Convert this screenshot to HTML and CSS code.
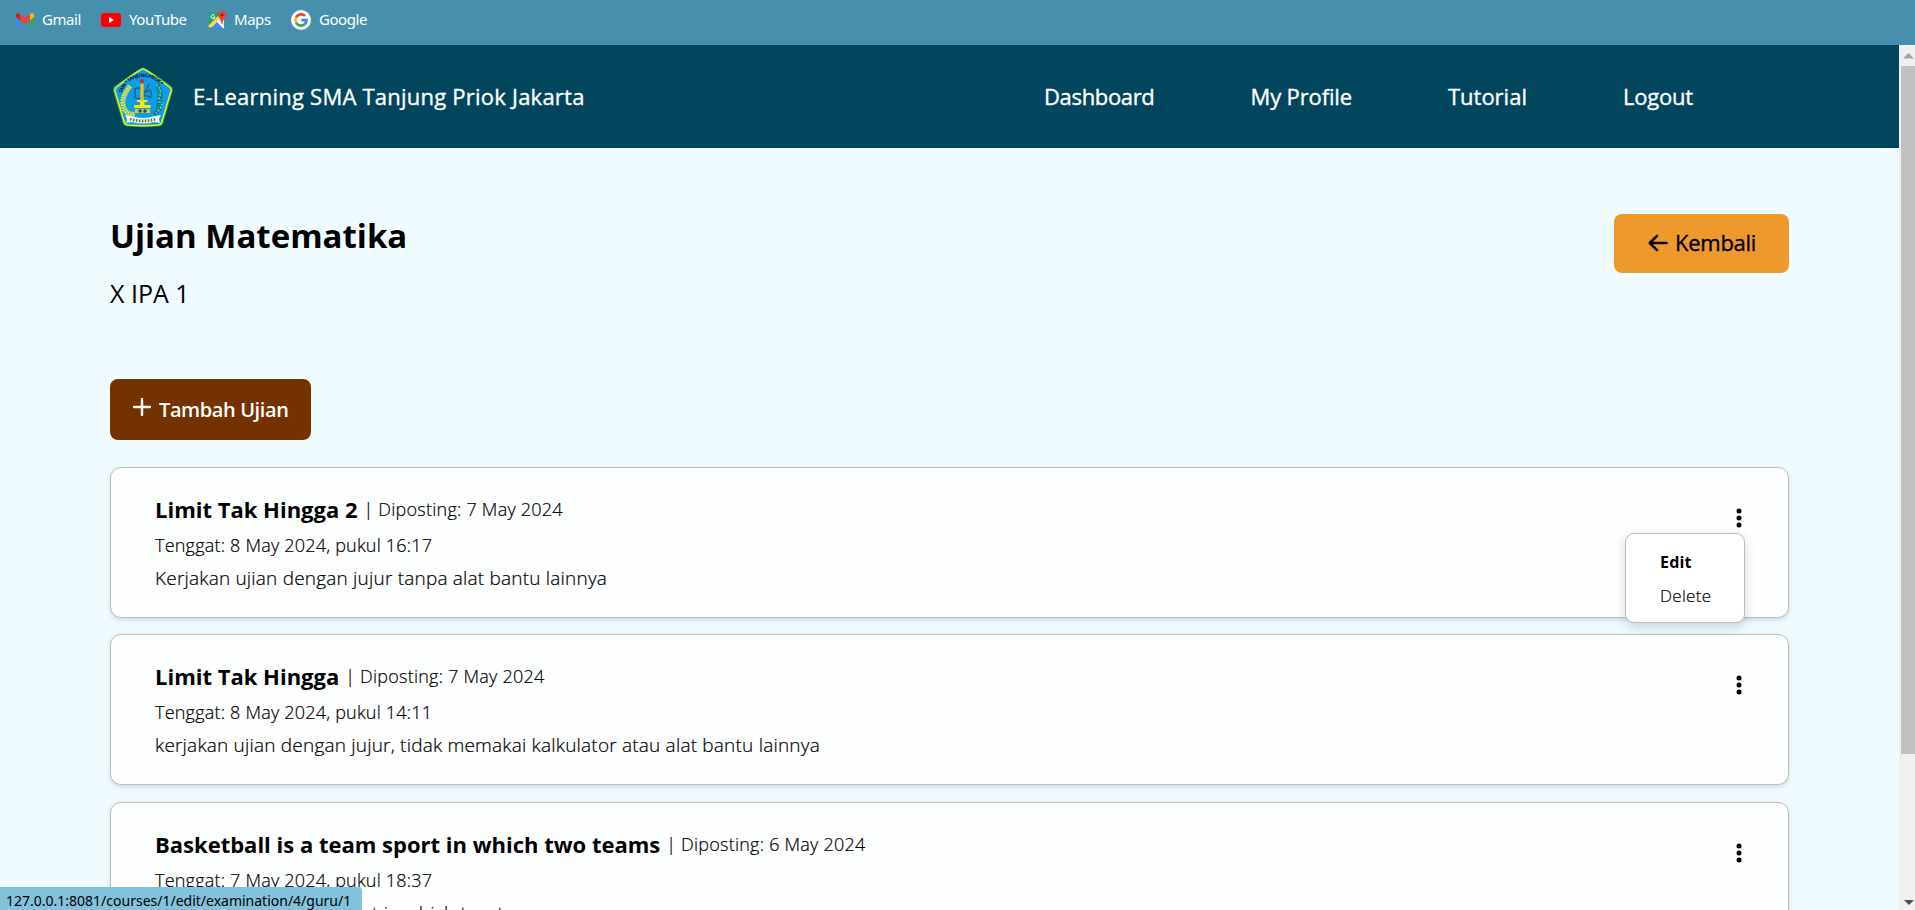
FILE: index.html
```html
<!DOCTYPE html>
<html lang="id">
<head>
<meta charset="utf-8">
<title>Ujian Matematika</title>
<link rel="stylesheet" href="styles.css">
</head>
<body>
<div class="bookmarks">
  <span class="bookmark bm-gmail"><svg width="18" height="14" viewBox="0 0 18 14"><path d="M0 3v9.500Q0 14 1.200 14H4V5z" fill="#4285f4"/><path d="M18 3v9.500Q18 14 16.800 14H14V5z" fill="#34a853"/><path d="M14 1.200 15 .5Q18-.6 18 2.500V4l-4 3.300z" fill="#fbbc04"/><path d="M4 1.200 9 5l5-3.800v6.100L9 11 4 7.300z" fill="#ea4335"/><path d="M4 1.200 3 .5Q0-.6 0 2.500V4l4 3.300z" fill="#c5221f"/></svg><span>Gmail</span></span>
  <span class="bookmark bm-youtube"><svg width="20" height="14" viewBox="0 0 20 14"><rect width="20" height="14" rx="3" fill="#f00"/><path d="M8 4v6l5-3z" fill="#fff"/></svg><span>YouTube</span></span>
  <span class="bookmark bm-maps"><svg width="18" height="18" viewBox="0 0 18 18"><path d="M1 2h15v14H1z" fill="#1fa463"/><path d="M1 16 14 3l2 2v11z" fill="#e8eaed"/><path d="M3 17 9.500 10.500 16 17z" fill="#4285f4"/><path d="M0 15 12 3l2 2L2 17z" fill="#fdd835"/><path d="M9.500 10.500 16 17" stroke="#fff" stroke-width="1.500"/><path d="M6.500 4.300A2 2 0 1 0 7 6H5.200" fill="none" stroke="#fff"/><path d="M14 0a4 4 0 0 1 4 4c0 3-3.300 4-3.600 9h-.8C13.300 8 10 7 10 4a4 4 0 0 1 4-4z" fill="#ea4335"/><circle cx="14" cy="4" r="1.500" fill="#8c1d18"/></svg><span>Maps</span></span>
  <span class="bookmark bm-google"><svg width="20" height="20" viewBox="0 0 20 20"><circle cx="10" cy="10" r="10" fill="#fff"/><g fill="none" stroke-width="2.700"><path d="M14 5.900A5.600 5.600 0 0 0 5.100 7.300" stroke="#ea4335"/><path d="M5.100 7.300a5.600 5.600 0 0 0 0 5.400" stroke="#fbbc05"/><path d="M5.100 12.700A5.600 5.600 0 0 0 13.600 14.300" stroke="#34a853"/><path d="M13.600 14.300A5.600 5.600 0 0 0 15.600 10.100H10.200" stroke="#4285f4"/></g></svg><span>Google</span></span>
</div>
<div class="viewport">
  <div class="page">
    <header class="navbar">
      <div class="brand">
        <svg class="logo" width="62" height="62" viewBox="0 0 62 62">
          <path d="M31 1.500Q34 1.500 60 20.500Q61.500 22 61 25L51 58Q50 60 46 60.500Q31 62 16 60.500Q12 60 11 58L1 25Q.5 22 2 20.500Q28 1.500 31 1.500z" fill="#1b9b4b"/>
          <path d="M31 3Q34 3 58 21.500Q59.500 23 59 25L49.500 57Q49 58.600 46 59Q31 60.500 16 59Q13 58.600 12.500 57L3 25Q2.500 23 4 21.500Q28 3 31 3z" fill="#0b9ee8" stroke="#f4ee20" stroke-width="1.500"/>
          <path id="logo-arc" d="M10 27Q16 11 31 11T54 27" fill="none"/>
          <text class="logo-text"><textPath href="#logo-arc" textLength="49">SMA * TANJUNG PRIOK *</textPath></text>
          <path d="M18 20Q7 34 13 44Q16 49 23 48" fill="none" stroke="#d5e44c" stroke-width="5" stroke-dasharray="2 .5"/>
          <path d="M45 19q4 6 3 12t-1 10-6 8" fill="none" stroke="#157865" stroke-width="5" stroke-dasharray="2 1"/>
          <path d="M44 19q6 4 4 10t1 8-5 10" fill="none" stroke="#8fd5d0" stroke-width="1.500" stroke-dasharray="1.500 2"/>
          <path d="M22 24q4-4 8 0t8-1M22 31q5 3 8 0t9 1M23 22v9m14-13-5 10M39 24v7" fill="none" stroke="#315b74" stroke-width="1.300"/>
          <path d="M28.500 18h3v16h4v2h-3v3h6v3H22v-3h6v-3h-3v-2h3.500z" fill="#f8e717"/>
          <path d="M30 16v19" stroke="#e19724"/>
          <circle cx="30" cy="15" r="2" fill="#e5232c"/>
          <path d="M23 43h15v4H23z" fill="#d9c936"/><circle cx="28" cy="45" r="1.800" fill="#26535a"/><circle cx="33" cy="45" r="1.800" fill="#26535a"/>
          <path d="M13 49l6 1q12 4 24 0l6-1-2 4 1 4-6-1q-11 3-22 0l-6 1 1-4z" fill="#eef5e7"/>
          <path d="M18 53q13 4 26 0" fill="none" stroke="#46776c" stroke-width="2.800" stroke-dasharray="1.500 1.500"/>
        </svg>
        <span class="brand-name">E-Learning SMA Tanjung Priok Jakarta</span>
      </div>
      <nav class="menu"><a class="nav-dashboard">Dashboard</a><a class="nav-profile">My Profile</a><a>Tutorial</a><a class="nav-logout">Logout</a></nav>
    </header>
    <main class="content">
      <div class="heading">
        <div><h1 class="title">Ujian Matematika</h1><p class="subtitle">X IPA 1</p></div>
        <a class="back"><svg width="20" height="18" viewBox="0 0 20 18"><path d="M9 1.800 1.800 9 9 16.200M2 9h16.500" fill="none" stroke="#000" stroke-width="2.500" stroke-linecap="round" stroke-linejoin="round"/></svg><span>Kembali</span></a>
      </div>
      <a class="add"><svg width="18" height="18" viewBox="0 0 18 18"><path d="M9 1v16M1 9h16" stroke="#fff" stroke-width="2.400" stroke-linecap="round"/></svg><span>Tambah Ujian</span></a>
      <div class="list">
        <article class="card">
          <div><div class="card-head"><h2 class="card-title">Limit Tak Hingga 2</h2><span class="sep">|</span><span class="posted">Diposting: 7 May 2024</span></div>
          <p class="due">Tenggat: 8 May 2024, pukul 16:17</p><p class="desc">Kerjakan ujian dengan jujur tanpa alat bantu lainnya</p></div>
          <div class="actions"><svg class="kebab" width="6" height="20" viewBox="0 0 6 20"><circle cx="3" cy="3" r="2.500"/><circle cx="3" cy="10" r="2.500"/><circle cx="3" cy="17" r="2.500"/></svg>
          <div class="dropdown"><a class="edit">Edit</a><a class="delete">Delete</a></div></div>
        </article>
        <article class="card">
          <div><div class="card-head"><h2 class="card-title">Limit Tak Hingga</h2><span class="sep">|</span><span class="posted">Diposting: 7 May 2024</span></div>
          <p class="due">Tenggat: 8 May 2024, pukul 14:11</p><p class="desc">kerjakan ujian dengan jujur, tidak memakai kalkulator atau alat bantu lainnya</p></div>
          <div class="actions"><svg class="kebab" width="6" height="20" viewBox="0 0 6 20"><circle cx="3" cy="3" r="2.500"/><circle cx="3" cy="10" r="2.500"/><circle cx="3" cy="17" r="2.500"/></svg></div>
        </article>
        <article class="card">
          <div><div class="card-head"><h2 class="card-title">Basketball is a team sport in which two teams</h2><span class="sep">|</span><span class="posted">Diposting: 6 May 2024</span></div>
          <p class="due">Tenggat: 7 May 2024, pukul 18:37</p><p class="desc">Basketball is a team sport in which two teams</p></div>
          <div class="actions"><svg class="kebab" width="6" height="20" viewBox="0 0 6 20"><circle cx="3" cy="3" r="2.500"/><circle cx="3" cy="10" r="2.500"/><circle cx="3" cy="17" r="2.500"/></svg></div>
        </article>
      </div>
    </main>
  </div>
  <div class="scrollbar">
    <svg width="16" height="21" viewBox="0 0 16 21"><path d="M4 13.500 9.500 8 15 13.500z" fill="#a3a3a3"/></svg>
    <div class="thumb"></div>
    <svg class="down" width="16" height="16" viewBox="0 0 16 16"><path d="M5 6h10l-5 5z" fill="#505050"/></svg>
  </div>
</div>
<div class="status">127.0.0.1:8081/courses/1/edit/examination/4/guru/1</div>
</body>
</html>
```
FILE: styles.css
```css
* { box-sizing: border-box; }
body { margin: 0; height: 910px; overflow: hidden; font-family: "Open Sans", "Noto Sans", sans-serif; color: #000; }
h1, h2, p { margin: 0; }
svg { display: block; flex: none; }
.bookmarks { height: 45px; background: #4690ad; display: flex; padding: 0 16px; color: #fff; font: 15px/20px "Noto Sans", sans-serif; letter-spacing: -.45px; }
.bookmark { display: flex; align-items: center; gap: 8px; height: 40px; white-space: nowrap; }
.bookmark span { padding-bottom: 2px; }
.bm-gmail { width: 85px; }
.bm-youtube { width: 107px; }
.bm-maps { width: 83px; }
.viewport { display: flex; height: 865px; }
.page { width: 1899px; overflow: hidden; background: #effbff; }
.navbar { height: 103px; background: #02465d; color: #fff; display: flex; justify-content: space-between; padding: 0 206px 0 112px; }
.brand { display: flex; align-items: center; gap: 19px; }
.logo-text { font-size: 5px; font-weight: 700; fill: #123; }
.brand-name, .menu { font-size: 22px; line-height: 30px; white-space: nowrap; padding-bottom: 2px; -webkit-text-stroke: .35px; }
.brand-name { letter-spacing: .23px; }
.menu { display: flex; align-items: center; gap: 96px; }
.nav-dashboard { letter-spacing: -.34px; }
.nav-profile { letter-spacing: -.14px; }
.nav-logout { letter-spacing: -.2px; }
.content { padding: 66px 110px 0; }
.heading { display: flex; justify-content: space-between; align-items: flex-start; height: 165px; }
.title { font-size: 33px; line-height: 44px; font-weight: 700; }
.subtitle { font-size: 25px; line-height: 34px; margin-top: 18px; }
.back { width: 175px; height: 59px; border-radius: 8px; background: #ee992c; display: flex; align-items: center; padding-left: 34px; gap: 7px; font-size: 22px; letter-spacing: -.26px; -webkit-text-stroke: .35px; }
.back span { padding-bottom: 3px; }
.back svg { margin-bottom: 1px; }
.add { width: 201px; height: 61px; border-radius: 8px; background: #743200; color: #fff; display: flex; align-items: center; padding-left: 23px; gap: 8px; font-size: 20px; font-weight: 600; letter-spacing: -.4px; }
.add svg { margin-bottom: 5px; }
.list { margin-top: 27px; display: flex; flex-direction: column; gap: 16.800px; }
.card { height: 150.600px; flex: none; border: 1px solid #bdbdbd; border-radius: 11px; background: #fdfefe; box-shadow: 0 2px 5px rgba(0,0,0,.13); display: flex; justify-content: space-between; padding: 25px 46px 0 44px; font-size: 18px; line-height: 32px; white-space: nowrap; font-weight: 300; -webkit-text-stroke: .2px; }
.card-head { display: flex; align-items: center; height: 32px; }
.card-title { font-size: 22px; font-weight: 700; line-height: 32px; -webkit-text-stroke: 0; }
.sep { margin: 0 5px 0 6px; }
.posted { letter-spacing: .24px; }
.due { margin-top: 4px; letter-spacing: .21px; }
.desc { margin-top: 1px; font-size: 19px; letter-spacing: .2px; }
.actions { position: relative; width: 6px; padding-top: 15px; }
.dropdown { position: absolute; z-index: 2; right: -3px; top: 40px; width: 120px; height: 90px; border: 1px solid #bdbdbd; border-radius: 9px; background: #fff; box-shadow: 0 4px 12px rgba(0,0,0,.16); padding: 12px 0 0 34px; display: flex; flex-direction: column; font-size: 16px; line-height: 33px; }
.edit { font-weight: 700; letter-spacing: .2px; -webkit-text-stroke: 0; }
.delete { font-size: 17px; letter-spacing: .3px; }
.scrollbar { width: 16px; background: #f0f0f0; display: flex; flex-direction: column; }
.thumb { height: 688px; margin-left: 2px; background: #c1c1c1; }
.down { margin-top: auto; }
.status { position: absolute; left: 0; bottom: 0; width: 362px; height: 23px; background: #83c2dd; border-top-right-radius: 4px; padding-left: 6px; font: 14px/27px "Noto Sans", sans-serif; white-space: nowrap; }
```
